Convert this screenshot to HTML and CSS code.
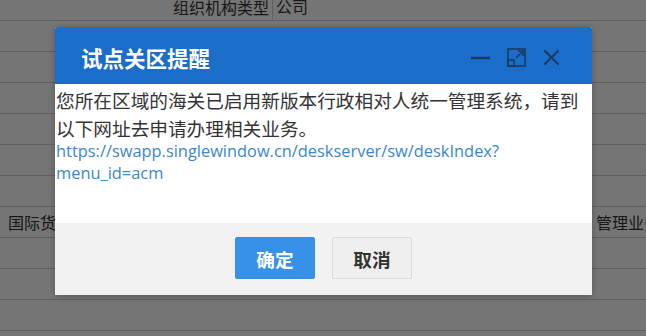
FILE: index.html
```html
<!DOCTYPE html>
<html lang="zh">
<head>
<meta charset="utf-8">
<link rel="stylesheet" href="styles.css">
</head>
<body>
<div class="table">
  <div class="row first"><span class="label">组织机构类型</span><span class="value">公司</span></div>
  <div class="row"></div>
  <div class="row"></div>
  <div class="row"></div>
  <div class="row"></div>
  <div class="row"></div>
  <div class="row"></div>
  <div class="row wide"><span class="left">国际货运代理企业</span><span class="right">管理业务</span></div>
  <div class="row"></div>
  <div class="row"></div>
  <div class="row"></div>
</div>
<div class="overlay"></div>
<div class="dialog">
  <div class="head">
    <span class="title">试点关区提醒</span>
    <div class="tools">
      <svg class="ico" width="19" height="19" viewBox="0 0 19 19"><path d="M0 10h19" stroke="#1b3a62" stroke-width="2.4" fill="none"/></svg>
      <svg class="ico" width="19" height="19" viewBox="0 0 19 19"><rect x="1" y="1" width="17" height="17" fill="none" stroke="#1b3a62" stroke-width="1.6"/><rect x="1" y="12" width="6" height="6" fill="none" stroke="#1b3a62" stroke-width="1.6"/><path d="M9 10L16 3M11 3h5v5" fill="none" stroke="#1b3a62" stroke-width="1.6"/></svg>
      <svg class="ico" width="17" height="17" viewBox="0 0 17 17"><path d="M1.5 1.5L15.5 15.5M15.5 1.5L1.5 15.5" stroke="#1b3a62" stroke-width="2" fill="none"/></svg>
    </div>
  </div>
  <div class="body">
    <p class="msg">您所在区域的海关已启用新版本行政相对人统一管理系统，请到以下网址去申请办理相关业务。</p>
    <a class="link">https://swapp.singlewindow.cn/deskserver/sw/deskIndex?<br>menu_id=acm</a>
  </div>
  <div class="foot">
    <button class="btn ok">确定</button>
    <button class="btn cancel">取消</button>
  </div>
</div>
</body>
</html>
```
FILE: styles.css
```css
html, body { margin: 0; padding: 0; }
body {
  width: 646px; height: 336px; overflow: hidden; background: #fff;
  font-family: "Noto Sans CJK SC", "Noto Sans", sans-serif;
  position: relative;
}
.table { display: flex; flex-direction: column; margin-top: -10px; }
.row {
  height: 30px; border-bottom: 1px solid #d2d2d2; display: flex; align-items: center;
  font-size: 16px; color: #333;
}
.row.first .label { width: 273px; text-align: right; padding-right: 3px; border-right: 1px solid #d2d2d2; height: 100%; line-height: 30px; box-sizing: border-box; padding-top: 2px; }
.row.first .value { padding-left: 3px; line-height: 30px; padding-top: 2px; }
.row.wide { justify-content: space-between; }
.row.wide .left { padding-left: 8px; }
.row.wide .right { margin-right: -14px; }
.overlay { position: absolute; inset: 0; background: rgba(0,0,0,0.54); }
.dialog {
  position: absolute; left: 55px; top: 27px; width: 537px;
  background: #fff; box-shadow: 0 1px 6px rgba(0,0,0,0.25); border-radius: 2px 2px 0 0;
}
.head {
  height: 57px; background: #1a6dc8; display: flex; align-items: center;
  justify-content: space-between; padding: 3px 32px 0 26px; box-sizing: border-box; border-radius: 2px 2px 0 0;
}
.title { color: #fff; font-size: 21.5px; font-weight: bold; }
.tools { display: flex; gap: 17px; align-items: center; }
.ico { display: block; }
.body { height: 139px; padding: 2px 0 0 1px; box-sizing: border-box; }
.msg { margin: 0; font-size: 18.67px; line-height: 28px; color: #333; }
.link { display: block; font-size: 16.4px; line-height: 22px; color: #3b87c9; font-family: "Open Sans", "Noto Sans", sans-serif; margin-top: -2px; }
.foot {
  height: 72px; background: #f2f2f2; display: flex; justify-content: center;
  align-items: flex-start; gap: 17px; padding-top: 14px; box-sizing: border-box;
}
.btn {
  width: 80px; height: 42px; font-family: inherit; font-size: 18.67px; font-weight: bold;
  border-radius: 2px; padding: 0; margin: 0;
}
.ok { background: #3891e8; color: #fff; border: 1px solid #3a8ee0; }
.cancel { background: #efefef; color: #333; border: 1px solid #dcdcdc; }
```
